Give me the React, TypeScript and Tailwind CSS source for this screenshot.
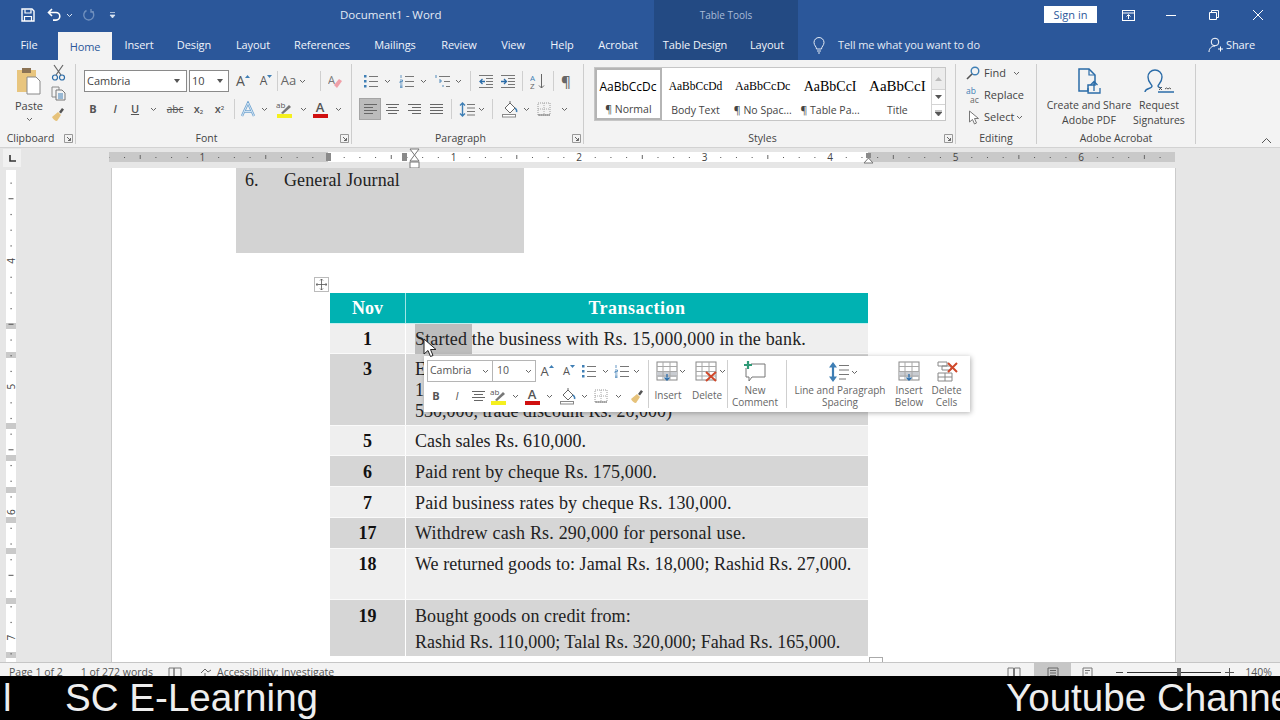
import React from 'react';

const serif = "font-['Liberation_Serif',serif]";

const Svg = ({ w, h, children, className = '' }: { w: number; h: number; children?: React.ReactNode; className?: string }) => (
  <svg width={w} height={h} viewBox={`0 0 ${w} ${h}`} fill="none" className={`shrink-0 ${className}`}>{children}</svg>
);

const Chev = ({ c = '#666', className = '' }: { c?: string; className?: string }) => (
  <Svg w={7} h={5} className={className}><path d="M1 1l2.5 2.5L6 1" stroke={c} strokeWidth="1" /></Svg>
);

const Sep = ({ h = 'h-[20px]' }: { h?: string }) => <div className={`w-px bg-[#cfcfcf] shrink-0 ${h}`} />;

const Cell = ({ w, children, className = '' }: { w: string; children?: React.ReactNode; className?: string }) => (
  <div className={`flex items-center justify-center shrink-0 h-[22px] ${w} ${className}`}>{children}</div>
);

// small ribbon drawings
const Lines = ({ kind }: { kind: 'left' | 'center' | 'right' | 'justify' }) => {
  const d = {
    left: 'M1 2.5h13M1 5.5h9M1 8.5h13M1 11.5h9',
    center: 'M1 2.5h13M3 5.5h9M1 8.5h13M3 11.5h9',
    right: 'M1 2.5h13M5 5.5h9M1 8.5h13M5 11.5h9',
    justify: 'M1 2.5h13M1 5.5h13M1 8.5h13M1 11.5h13',
  }[kind];
  return <Svg w={15} h={14}><path d={d} stroke="#666" /></Svg>;
};
const Bullets = () => (
  <Svg w={16} h={14}>
    <rect x="1" y="1" width="2.5" height="2.5" fill="#3f7fb5" /><rect x="1" y="6" width="2.5" height="2.5" fill="#3f7fb5" /><rect x="1" y="11" width="2.5" height="2.5" fill="#3f7fb5" />
    <path d="M6 2.5h9M6 7.5h9M6 12.5h9" stroke="#777" />
  </Svg>
);
const Numbers = () => (
  <Svg w={16} h={14}>
    <path d="M2 1v3M1 6h2.5v1.5H1V9h2.5M1 11h2.5M1 12.3h2.5M1 13.6h2.5" stroke="#3f7fb5" strokeWidth=".8" />
    <path d="M6 2.5h9M6 7.5h9M6 12.5h9" stroke="#777" />
  </Svg>
);
const Multi = () => (
  <Svg w={16} h={14}>
    <path d="M1 1v3M4 6h2v2H4M8 11v2" stroke="#3f7fb5" strokeWidth=".9" />
    <path d="M4 2.5h11M9 7.5h6M11 12.5h4" stroke="#777" />
  </Svg>
);
const Indent = ({ inc }: { inc?: boolean }) => (
  <Svg w={16} h={14}>
    <path d="M1 1.5h14M8 4.5h7M8 7.5h7M8 10.5h7M1 13.5h14" stroke="#777" />
    {inc ? <path d="M1 7.5h5M4 5l2.5 2.5L4 10" stroke="#2b6ca8" strokeWidth="1.3" /> : <path d="M7 7.5H2M4.5 5L2 7.5 4.5 10" stroke="#2b6ca8" strokeWidth="1.3" />}
  </Svg>
);
const LineSpace = () => (
  <Svg w={16} h={17}>
    <path d="M3.5 2v13M1 4.5L3.5 2 6 4.5M1 12.5L3.5 15 6 12.5" stroke="#3f7fb5" strokeWidth="1.4" />
    <path d="M8 3.5h8M8 7h8M8 10.5h8M8 14h8" stroke="#777" />
  </Svg>
);
const LineSpaceBig = () => (
  <Svg w={22} h={22}>
    <path d="M5 3v16" stroke="#3f7fb5" strokeWidth="2.2" />
    <path d="M1 6.5L5 1l4 5.500zM1 15.500L5 21l4-5.500z" fill="#3f7fb5" />
    <path d="M11 4.500h10M11 9h10M11 13.500h10M11 18h7" stroke="#777" />
  </Svg>
);
const Bucket = () => (
  <Svg w={18} h={18}>
    <path d="M4 8l5-5 5 5-5 5z" stroke="#666" fill="#fff" />
    <path d="M9 3V1" stroke="#666" />
    <path d="M14 8c1.5 1.5 2 3 1.5 4" stroke="#3f7fb5" strokeWidth="1.5" />
    <rect x="1.5" y="14.5" width="13" height="2.5" stroke="#888" fill="#fff" />
  </Svg>
);
const BorderBox = () => (
  <Svg w={14} h={14}>
    <rect x="1" y="1" width="12" height="12" stroke="#999" strokeDasharray="1 1" />
    <path d="M7 1v12M1 7h12" stroke="#aaa" strokeDasharray="1 1" />
    <path d="M1 13h12" stroke="#777" />
  </Svg>
);
const Painter = () => (
  <Svg w={16} h={16}>
    <path d="M9 6l3-4 2 1.5-3 4z" fill="#555" />
    <path d="M2 11l6-5 3 3-4 6c-2 0-4-2-5-4z" fill="#e6c27a" />
  </Svg>
);
const Highlight = () => (
  <div className="flex flex-col items-center w-[17px] leading-none">
    <Svg w={17} h={13}>
      <text x="0" y="7" fontSize="8" fill="#555" fontFamily="Open Sans">ab</text>
      <path d="M5 12l8-8 2 2-8 7z" fill="#777" />
    </Svg>
    <div className="w-[15px] h-[4px] bg-[#f5f01e]" />
  </div>
);
const FontColor = () => (
  <div className="flex flex-col items-center w-[15px]">
    <span className="text-[13px] leading-[12px] font-semibold text-[#555]">A</span>
    <div className="w-[15px] h-[4px] bg-[#d01010] mt-[1px]" />
  </div>
);
const TextEffect = () => (
  <Svg w={16} h={17}>
    <path d="M2 15L8 2l6 13M4.5 10.5h7" stroke="#6fa3d0" strokeWidth="2.4" />
    <path d="M2 15L8 2l6 13M4.5 10.5h7" stroke="#e8f2fa" strokeWidth=".8" />
  </Svg>
);
const SizeA = ({ up, size = 'text-[14px]' }: { up?: boolean; size?: string }) => (
  <div className="flex items-start">
    <span className={`${size} leading-[16px] text-[#555]`}>A</span>
    <Svg w={5} h={4} className="mt-[1px]"><path d={up ? 'M0 4l2.5-3L5 4z' : 'M0 1l2.5 3L5 1z'} fill="#3f7fb5" /></Svg>
  </div>
);
const Grid = ({ hi }: { hi?: boolean }) => (
  <>
    <rect x="1" y="1" width="20" height="18" fill="#fff" stroke="#888" />
    {hi && <rect x="1" y="11" width="20" height="5" fill="#c9ccd1" />}
    <path d="M1 5.5h20M1 10.5h20M1 15h20M7 1v18M14 1v18" stroke="#a8a8a8" />
  </>
);
const TableInsert = () => (
  <Svg w={22} h={21}>
    <Grid hi />
    <path d="M11 13v6M8.5 16.5L11 19l2.5-2.5" stroke="#2b6ca8" strokeWidth="1.3" />
  </Svg>
);
const TableDelete = () => (
  <Svg w={24} h={21}>
    <Grid />
    <path d="M11 11l10 9M21 11l-10 9" stroke="#d0482a" strokeWidth="2" />
  </Svg>
);
const CommentNew = () => (
  <Svg w={24} h={22}>
    <path d="M8 3h14v13H9l-3 4v-4H3V7" stroke="#777" />
    <path d="M5 0v8M1 4h8" stroke="#2f9a77" strokeWidth="2.2" />
  </Svg>
);
const DeleteCells = () => (
  <Svg w={24} h={21}>
    <path d="M3 1h9v4H3zM7 5h9v4H7zM3 12h14v8H3zM10 12v8M3 16h14" stroke="#888" />
    <path d="M13 2l9 9M22 2l-9 9" stroke="#d0482a" strokeWidth="2" />
  </Svg>
);
const Launcher = () => (
  <Svg w={9} h={9}>
    <path d="M.5.5h8v8h-8z" stroke="#999" />
    <path d="M3 3l3.5 3.5M6.5 4v2.5H4" stroke="#666" />
  </Svg>
);

const Group = ({ w, label, launcher, children }: { w: string; label: string; launcher?: boolean; children?: React.ReactNode }) => (
  <div className={`flex shrink-0 h-full ${w}`}>
    <div className="flex flex-col flex-1 min-w-0">
      <div className="flex-1 min-h-0">{children}</div>
      <div className={`relative h-[16px] text-center text-[10.5px] leading-[15px] text-[#444] ${launcher ? 'pr-[14px]' : ''}`}>
        {label}
        {launcher && <div className="absolute right-[2px] top-[3px]"><Launcher /></div>}
      </div>
    </div>
    <div className="w-px h-[80px] mt-[4px] bg-[#cdcdcd]" />
  </div>
);

const tabs = [
  { t: 'File', w: 'w-[58px]' }, { t: 'Home', w: 'w-[54px]', on: true }, { t: 'Insert', w: 'w-[54px]' }, { t: 'Design', w: 'w-[56px]' },
  { t: 'Layout', w: 'w-[62px]' }, { t: 'References', w: 'w-[76px]' }, { t: 'Mailings', w: 'w-[70px]' }, { t: 'Review', w: 'w-[58px]' },
  { t: 'View', w: 'w-[50px]' }, { t: 'Help', w: 'w-[48px]' }, { t: 'Acrobat', w: 'w-[64px]' },
];

const styleTiles = [
  { s: 'AaBbCcDd', l: 'Body Text', c: "text-[11.5px] font-['Liberation_Serif',serif]" },
  { s: 'AaBbCcDc', l: '¶ No Spac...', c: "text-[12px] font-['Liberation_Serif',serif]" },
  { s: 'AaBbCcI', l: '¶ Table Pa...', c: "text-[14px] font-['Liberation_Serif',serif]" },
  { s: 'AaBbCcI', l: 'Title', c: "text-[15px] font-['Liberation_Serif',serif]" },
];

const rows = [
  { n: '1', h: 'h-[30px]', bg: 'bg-[#efefef]', pt: 'pt-[5px]', tr: 'tracking-[0.17px]' },
  { n: '3', h: 'h-[72px]', bg: 'bg-[#d6d6d6]', pt: 'pt-[5px]', tr: '', lines: ['E', '1', '530,000, trade discount Rs. 20,000)'] },
  { n: '5', h: 'h-[30px]', bg: 'bg-[#efefef]', pt: 'pt-[5px]', tr: '', lines: ['Cash sales Rs. 610,000.'] },
  { n: '6', h: 'h-[31px]', bg: 'bg-[#d6d6d6]', pt: 'pt-[6px]', tr: 'tracking-[0.12px]', lines: ['Paid rent by cheque Rs. 175,000.'] },
  { n: '7', h: 'h-[31px]', bg: 'bg-[#efefef]', pt: 'pt-[6px]', tr: 'tracking-[0.17px]', lines: ['Paid business rates by cheque Rs. 130,000.'] },
  { n: '17', h: 'h-[31px]', bg: 'bg-[#d6d6d6]', pt: 'pt-[5px]', tr: 'tracking-[0.19px]', lines: ['Withdrew cash Rs. 290,000 for personal use.'] },
  { n: '18', h: 'h-[51px]', bg: 'bg-[#efefef]', pt: 'pt-[5px]', tr: 'tracking-[0.05px]', lines: ['We returned goods to: Jamal Rs. 18,000; Rashid Rs. 27,000.'] },
];

const HRuler = () => {
  const marks = [];
  for (let i = -14; i <= 53; i++) {
    const x = 219 + i * 15.69;
    if (i === 0) continue;
    if (i % 8 === 0) marks.push(<text key={i} x={x} y="13" fontSize="10" textAnchor="middle" fill="#444" fontFamily="Open Sans">{Math.abs(i / 8)}</text>);
    else if (i % 4 === 0) marks.push(<rect key={i} x={x} y="7" width="1" height="4" fill="#666" />);
    else marks.push(<rect key={i} x={x} y="9" width="1" height="1" fill="#555" />);
  }
  return (
    <svg width="1066" height="20" viewBox="0 0 1066 20" className="shrink-0">
      <rect x="0" y="4" width="1066" height="10" fill="#c9c9c9" />
      <rect x="219" y="4" width="540" height="10" fill="#fff" />
      {marks}
      <rect x="217" y="5" width="5" height="8" fill="#8a8a8a" />
      <rect x="293" y="5" width="5" height="8" fill="#8a8a8a" />
      <path d="M301 1h9l-4.5 6zM301 13l4.5-6 4.5 6z" fill="#fff" stroke="#777" />
      <rect x="301" y="14" width="9" height="6" fill="#fff" stroke="#777" />
      <rect x="757" y="5" width="5" height="5" fill="#8a8a8a" />
      <path d="M755 15l4.5-5 4.5 5z" fill="#fff" stroke="#777" />
    </svg>
  );
};

const VRuler = () => {
  const marks = [];
  for (let i = -5; i <= 26; i++) {
    const y = 91 + i * 15.69;
    if (i % 8 === 0) marks.push(<text key={i} transform={`translate(8.5 ${y}) rotate(-90)`} fontSize="10" textAnchor="middle" fill="#444" fontFamily="Open Sans">{4 + i / 8}</text>);
    else if (i % 4 === 0) marks.push(<rect key={i} x="2.5" y={y} width="5" height="1" fill="#555" />);
    else marks.push(<rect key={i} x="4.5" y={y} width="1.2" height="1.2" fill="#555" />);
  }
  const bands = [153, 182, 253, 285, 317, 347, 378, 428, 482];
  return (
    <svg width="10" height="492" viewBox="0 0 10 492" className="shrink-0">
      <rect width="10" height="492" fill="#fff" />
      {bands.map(y => <rect key={y} x="0" y={y} width="10" height="6" fill="#c9c9c9" />)}
      {marks}
    </svg>
  );
};

const FloatLabel = ({ children, className = '' }: { children?: React.ReactNode; className?: string }) => (
  <div className={`text-[10px] leading-[12px] text-[#666] text-center whitespace-nowrap ${className}`}>{children}</div>
);

export default function App() {
  return (
    <div className="w-[1280px] h-[720px] overflow-hidden flex flex-col font-['Open_Sans',sans-serif] bg-black">
      {/* title bar */}
      <div className="flex h-[30px] shrink-0 bg-[#2b579a] text-white text-[11px]">
        <div className="w-[340px] flex items-center">
          <Svg w={14} h={14} className="ml-[21px]">
            <path d="M1 1h10l2 2v10H1z" stroke="#fff" strokeWidth="1.4" />
            <path d="M4 1.5v3.5h6V1.5M3.5 13V8.5h7V13" stroke="#fff" strokeWidth="1.2" />
          </Svg>
          <Svg w={15} h={14} className="ml-[12px]"><path d="M5 1L1.5 4.5 5 8M2 4.5h7a3.8 3.8 0 010 7.6H6" stroke="#fff" strokeWidth="1.6" /></Svg>
          <Chev c="#dbe5f2" className="ml-[4px]" />
          <Svg w={14} h={14} className="ml-[9px]"><path d="M9 2.5a5 5 0 11-4.5 0M9 1v3h3" stroke="#6f8fbd" strokeWidth="1.4" /></Svg>
          <Svg w={7} h={8} className="ml-[13px]"><path d="M1 1.5h5M1 4l2.5 3L6 4z" stroke="#dbe5f2" fill="#dbe5f2" strokeWidth=".7" /></Svg>
        </div>
        <div className="w-[314px] leading-[30px] text-[11.5px] text-[#e4ebf5]">Document1 - Word</div>
        <div className="w-[144px] bg-[#234a83] text-center leading-[30px] text-[10px] text-[#a9bcd8]">Table Tools</div>
        <div className="flex-1 flex items-center">
          <div className="ml-[246px] mb-[1px] w-[53px] h-[17px] bg-white text-[#2b579a] text-center text-[11px] leading-[17px]">Sign in</div>
          <Svg w={13} h={11} className="ml-[25px]">
            <rect x=".5" y=".5" width="12" height="10" stroke="#fff" />
            <path d="M.5 3h12M6.5 9V5M4.5 6.5l2-2 2 2" stroke="#fff" />
          </Svg>
          <div className="ml-[31px] w-[10px] h-px bg-white" />
          <Svg w={10} h={10} className="ml-[33px]"><path d="M.5 2.5h7v7h-7zM2.5 2.5v-2h7v7h-2" stroke="#fff" /></Svg>
          <Svg w={12} h={12} className="ml-[33px]"><path d="M1 1l10 10M11 1L1 11" stroke="#fff" /></Svg>
        </div>
      </div>

      {/* tabs */}
      <div className="flex h-[30px] shrink-0 bg-[#2b579a] text-[#f0f4fa] text-[11px] tracking-[-0.1px]">
        {tabs.map(t => (
          <div key={t.t} className={`${t.w} text-center leading-[30px] ${t.on ? 'bg-[#f3f3f3] text-[#2b579a] mt-[2px] leading-[26px]' : ''}`}>{t.t}</div>
        ))}
        <div className="w-[4px]" />
        <div className="flex w-[144px] bg-[#234a83]">
          <div className="w-[82px] text-center leading-[30px]">Table Design</div>
          <div className="w-[62px] text-center leading-[30px]">Layout</div>
        </div>
        <Svg w={12} h={17} className="ml-[15px] mt-[7px]">
          <path d="M3.5 12c0-2.5-2.5-3.5-2.5-6.5a5 5 0 0110 0c0 3-2.5 4-2.5 6.5zM4 14h4M5 16h2" stroke="#e4ebf5" />
        </Svg>
        <div className="ml-[13px] w-[343px] leading-[30px] text-[#e4ebf5]">Tell me what you want to do</div>
        <Svg w={16} h={16} className="ml-[27px] mt-[7px]">
          <circle cx="7" cy="5" r="3.8" stroke="#fff" />
          <path d="M1 15c0-3.5 2.5-6 6-6M10 12h5M12.5 9.5v5" stroke="#fff" />
        </Svg>
        <div className="ml-[2px] leading-[30px]">Share</div>
      </div>

      {/* ribbon */}
      <div className="flex h-[88px] shrink-0 bg-[#f3f3f3] border-b border-[#d2d2d2] text-[#444]">
        <Group w="w-[76px]" label="Clipboard" launcher>
          <div className="flex">
            <div className="w-[46px] flex flex-col items-center pt-[7px] pl-[12px]">
              <Svg w={26} h={28}>
                <rect x="1" y="3" width="19" height="22" fill="#e8c57e" />
                <rect x="6" y="1" width="9" height="5" fill="#8b7355" />
                <path d="M11 10h9l4 4v13H11z" fill="#fff" stroke="#888" />
              </Svg>
              <div className="text-[11px] leading-[15px] mt-[3px]">Paste</div>
              <Chev className="mt-[4px]" />
            </div>
            <div className="flex flex-col items-center w-[24px] pt-[4px] gap-[5px]">
              <Svg w={15} h={17}>
                <path d="M3 1l7 10M12 1L5 11" stroke="#666" strokeWidth="1.2" />
                <circle cx="4" cy="13.5" r="2.5" stroke="#2b6ca8" strokeWidth="1.2" />
                <circle cx="11" cy="13.5" r="2.5" stroke="#2b6ca8" strokeWidth="1.2" />
              </Svg>
              <Svg w={15} h={15}>
                <path d="M1 1h7v10H1z" stroke="#888" />
                <path d="M5 4h6l3 3v7H5z" fill="#f3f3f3" stroke="#777" />
                <path d="M7 8h5M7 10h5M7 12h5" stroke="#3f7fb5" />
              </Svg>
              <Painter />
            </div>
          </div>
        </Group>

        <Group w="w-[276px]" label="Font" launcher>
          <div className="flex flex-col pt-[10px] gap-[6px]">
            <div className="flex items-center pl-[8px]">
              <div className="w-[103px] h-[22px] bg-white border border-[#8a8a8a] flex items-center justify-between pl-[2px] pr-[6px] text-[11px]">
                Cambria <Svg w={6} h={4}><path d="M0 0h6L3 4z" fill="#555" /></Svg>
              </div>
              <div className="ml-[2px] w-[40px] h-[22px] bg-white border border-[#8a8a8a] flex items-center justify-between pl-[2px] pr-[5px] text-[11px]">
                10 <Svg w={6} h={4}><path d="M0 0h6L3 4z" fill="#555" /></Svg>
              </div>
              <Cell w="w-[24px] ml-[2px]"><SizeA up /></Cell>
              <Cell w="w-[22px]"><SizeA size="text-[12px]" /></Cell>
              <Sep />
              <Cell w="w-[42px]" className="pr-[11px]"><span className="text-[13px] text-[#666] mr-[3px]">Aa</span><Chev /></Cell>
              <Sep />
              <Cell w="w-[28px]">
                <Svg w={15} h={15}>
                  <text x="0" y="10" fontSize="11" fill="#777" fontFamily="Open Sans">A</text>
                  <path d="M6 11l5-6 3 2-5 7z" fill="#f0a0a8" />
                </Svg>
              </Cell>
            </div>
            <div className="flex items-center pl-[6px] text-[#555]">
              <Cell w="w-[22px]"><span className="text-[11px] font-bold">B</span></Cell>
              <Cell w="w-[22px]"><span className="text-[11px] italic font-semibold">I</span></Cell>
              <Cell w="w-[36px]"><span className="text-[11px] font-semibold underline mr-[11px]">U</span><Chev /></Cell>
              <Cell w="w-[26px]"><span className="text-[10px] line-through">abc</span></Cell>
              <Cell w="w-[21px]"><span className="text-[11px] font-semibold">x<sub className="text-[6px]">2</sub></span></Cell>
              <Cell w="w-[21px]"><span className="text-[11px] font-semibold">x<sup className="text-[6px]">2</sup></span></Cell>
              <div className="ml-[4px]"><Sep /></div>
              <Cell w="w-[38px]"><TextEffect /><Chev className="ml-[5px]" /></Cell>
              <Cell w="w-[36px]"><Highlight /><Chev className="ml-[7px]" /></Cell>
              <Cell w="w-[36px]"><FontColor /><Chev className="ml-[7px]" /></Cell>
            </div>
          </div>
        </Group>

        <Group w="w-[232px]" label="Paragraph" launcher>
          <div className="flex flex-col pt-[10px] gap-[6px]">
            <div className="flex items-center pl-[7px]">
              <Cell w="w-[36px]"><Bullets /><Chev className="ml-[5px]" /></Cell>
              <Cell w="w-[36px]"><Numbers /><Chev className="ml-[5px]" /></Cell>
              <Cell w="w-[34px]"><Multi /><Chev className="ml-[4px]" /></Cell>
              <div className="ml-[5px]"><Sep /></div>
              <Cell w="w-[22px] ml-[4px]"><Indent /></Cell>
              <Cell w="w-[22px]"><Indent inc /></Cell>
              <div className="ml-[3px]"><Sep /></div>
              <Cell w="w-[24px] ml-[3px]">
                <Svg w={16} h={17}>
                  <text x="0" y="7.5" fontSize="8" fill="#3f7fb5" fontFamily="Open Sans">A</text>
                  <text x="0" y="16" fontSize="8" fill="#666" fontFamily="Open Sans">Z</text>
                  <path d="M11.5 1v14M9 12.5l2.5 2.5 2.5-2.5" stroke="#666" />
                </Svg>
              </Cell>
              <div className="ml-[3px]"><Sep /></div>
              <Cell w="w-[24px]"><span className="text-[15px] font-semibold text-[#666]">¶</span></Cell>
            </div>
            <div className="flex items-center pl-[7px]">
              <Cell w="w-[22px]" className="bg-[#bcbcbc] border border-[#a5a5a5]"><Lines kind="left" /></Cell>
              <Cell w="w-[22px]"><Lines kind="center" /></Cell>
              <Cell w="w-[22px]"><Lines kind="right" /></Cell>
              <Cell w="w-[23px]"><Lines kind="justify" /></Cell>
              <div className="ml-[3px]"><Sep /></div>
              <Cell w="w-[34px] ml-[3px]"><LineSpace /><Chev className="ml-[3px]" /></Cell>
              <div className="ml-[3px]"><Sep /></div>
              <Cell w="w-[34px] ml-[5px]"><Bucket /><Chev className="ml-[4px]" /></Cell>
              <Cell w="w-[40px]"><BorderBox /><Chev className="ml-[10px]" /></Cell>
            </div>
          </div>
        </Group>

        <Group w="w-[372px]" label="Styles" launcher>
          <div className="ml-[10px] mt-[7px] w-[352px] h-[54px] flex bg-white border border-[#c6c6c6]">
            <div className="w-[67px] border-2 border-[#b5b5b5] flex flex-col items-center overflow-hidden">
              <div className="text-[12px] leading-[17px] mt-[8px] whitespace-nowrap w-[60px] pl-[1px] overflow-hidden text-black">AaBbCcDc</div>
              <div className="text-[10.5px] leading-[14px] mt-[7px]">¶ Normal</div>
            </div>
            {styleTiles.map(s => (
              <div key={s.l} className="w-[67.5px] flex flex-col items-center overflow-hidden">
                <div className={`${s.c} h-[21px] leading-[21px] mt-[8px] whitespace-nowrap text-black`}>{s.s}</div>
                <div className="text-[10.5px] leading-[14px] mt-[6px] whitespace-nowrap">{s.l}</div>
              </div>
            ))}
            <div className="ml-auto w-[14px] flex flex-col border-l border-[#d4d4d4] text-[#555]">
              <div className="h-[21px] bg-[#ececec] flex items-center justify-center"><Svg w={7} h={4}><path d="M0 4l3.5-4L7 4z" fill="#bbb" /></Svg></div>
              <div className="h-[16px] border-y border-[#d4d4d4] flex items-center justify-center"><Svg w={7} h={4}><path d="M0 0l3.5 4L7 0z" fill="#555" /></Svg></div>
              <div className="flex-1 flex items-center justify-center"><Svg w={7} h={6}><path d="M0 0h7M0 2l3.5 4L7 2z" stroke="#555" fill="#555" strokeWidth=".7" /></Svg></div>
            </div>
          </div>
        </Group>

        <Group w="w-[81px]" label="Editing">
          <div className="flex flex-col pl-[10px] pt-[2px] text-[11px] leading-[22px]">
            <div className="flex items-center h-[22px]">
              <Svg w={14} h={14}><circle cx="9" cy="5" r="3.8" stroke="#3f7fb5" strokeWidth="1.4" /><path d="M6 8l-5 5" stroke="#555" strokeWidth="1.6" /></Svg>
              <span className="ml-[4px] mr-[7px]">Find</span><Chev />
            </div>
            <div className="flex items-center h-[22px]">
              <Svg w={15} h={17}>
                <text x="0" y="7" fontSize="8.5" fill="#3f7fb5" fontFamily="Open Sans">ab</text>
                <text x="4" y="15.5" fontSize="8.5" fill="#666" fontFamily="Open Sans">ac</text>
              </Svg>
              <span className="ml-[3px]">Replace</span>
            </div>
            <div className="flex items-center h-[22px]">
              <Svg w={12} h={15} className="ml-[2px]"><path d="M1.5 1v11l3-2.5 2 4.5 2-1-2-4.5h4z" stroke="#777" fill="#fff" /></Svg>
              <span className="ml-[4px] mr-[2px]">Select</span><Chev />
            </div>
          </div>
        </Group>

        <Group w="w-[159px]" label="Adobe Acrobat">
          <div className="flex pt-[8px] text-[10.5px] leading-[15px] text-center">
            <div className="w-[84px] ml-[10px] flex flex-col items-center whitespace-nowrap">
              <Svg w={24} h={26}>
                <path d="M2 1h10l6 6v10H11v6H2z" stroke="#2b6ca8" strokeWidth="1.5" />
                <path d="M12 1v6h6" stroke="#2b6ca8" strokeWidth="1.2" />
                <path d="M17 23v-9M13.5 17l3.5-3.5 3.5 3.5M11 20v5h12v-5" stroke="#2b6ca8" strokeWidth="1.3" />
              </Svg>
              <div className="mt-[4px]">Create and Share</div>
              <div>Adobe PDF</div>
            </div>
            <div className="w-[54px] ml-[1px] flex flex-col items-center whitespace-nowrap">
              <Svg w={32} h={26}>
                <path d="M2 24c0-4 7-3 7-6 0-2-4-3-4-9a7 7 0 0114 0c0 6-4 7-4 9 0 1 1 1.500 3 2" stroke="#2b6ca8" strokeWidth="1.4" />
                <path d="M15 24h16" stroke="#2b6ca8" strokeWidth="1.5" />
                <path d="M16 19l3 3M19 19l-3 3M22 21l1.500-1 1.500 1 1.500-1 1.500 1" stroke="#555" />
              </Svg>
              <div className="mt-[4px]">Request</div>
              <div>Signatures</div>
            </div>
          </div>
        </Group>

        <div className="flex-1 flex items-end justify-end pb-[3px] pr-[8px]">
          <Svg w={11} h={7}><path d="M1 6l4.500-4.500L10 6" stroke="#555" /></Svg>
        </div>
      </div>

      {/* horizontal ruler */}
      <div className="flex h-[20px] shrink-0 bg-[#e6e6e6]">
        <div className="ml-[3px] mt-px w-[18px] h-[18px] bg-[#f1f1f1] flex items-center justify-center">
          <Svg w={7} h={7}><path d="M1 0v6h6" stroke="#333" strokeWidth="1.6" /></Svg>
        </div>
        <div className="ml-[88px]"><HRuler /></div>
      </div>

      {/* document area */}
      <div className="flex h-[494px] shrink-0 bg-[#e6e6e6] overflow-hidden">
        <div className="w-[111px] shrink-0 pl-[6px] pt-[2px]"><VRuler /></div>
        <div className={`relative w-[1065px] shrink-0 bg-white border-x border-[#cbcbcb] ${serif} text-[18px] text-[#222]`}>
          <div className="ml-[124px] w-[288px] h-[85px] bg-[#d3d3d3] flex leading-[24px] tracking-[0.1px] text-[#222]">
            <span className="ml-[9px] w-[39px]">6.</span>
            <span>General Journal</span>
          </div>

          <div className="ml-[218px] mt-[40px] w-[538px]">
            <div className="flex h-[31px] bg-[#00b2b2] border-b border-[#c4efef] text-white font-bold leading-[30px] text-center">
              <div className="w-[76px] border-r border-[#9fe5e5]">Nov</div>
              <div className="flex-1 tracking-[0.5px]">Transaction</div>
            </div>
            {rows.map(r => (
              <div key={r.n} className={`flex border-b border-[#fafafa] ${r.h} ${r.bg}`}>
                <div className={`w-[76px] border-r border-white leading-[21px] font-bold text-center text-[#111] ${r.pt}`}>{r.n}</div>
                <div className={`pl-[9px] leading-[21px] whitespace-nowrap ${r.pt} ${r.tr}`}>
                  {r.lines ? r.lines.map(l => <div key={l}>{l}</div>) : (
                    <div><span className="bg-[#bdbdbd] py-[5px]">Started </span>the business with Rs. 15,000,000 in the bank.</div>
                  )}
                </div>
              </div>
            ))}
            <div className="flex h-[56px] bg-[#d6d6d6]">
              <div className="w-[76px] border-r border-white pt-[6px] leading-[21px] font-bold text-center text-[#111]">19</div>
              <div className="pl-[9px] pt-[6px] leading-[21px] whitespace-nowrap">
                <div className="tracking-[0.1px]">Bought goods on credit from:</div>
                <div className="mt-[5px]">Rashid Rs. 110,000; Talal Rs. 320,000; Fahad Rs. 165,000.</div>
              </div>
            </div>
          </div>

          {/* table handles */}
          <div className="absolute left-[202px] top-[109px] w-[15px] h-[15px] bg-white border border-[#bbb] flex items-center justify-center">
            <Svg w={11} h={11}><path d="M5.500 0v11M0 5.500h11M4 1.500L5.500 0 7 1.500M4 9.500L5.500 11 7 9.500M1.500 4L0 5.500 1.500 7M9.500 4L11 5.500 9.500 7" stroke="#555" strokeWidth=".8" /></Svg>
          </div>
          <div className="absolute left-[757px] top-[489px] w-[14px] h-[6px] bg-white border border-[#aaa]" />

          {/* mini toolbar */}
          <div className="absolute left-[312px] top-[188px] w-[546px] h-[56px] bg-white shadow-[1px_1px_5px_rgba(0,0,0,0.3)] flex font-['Open_Sans',sans-serif] tracking-normal text-[#555]">
            <div className="w-[224px] shrink-0 flex flex-col pl-[3px] pt-[4px]">
              <div className="flex items-center h-[22px]">
                <div className="w-[66px] h-[22px] border border-[#b5b5b5] flex items-center justify-between pl-[2px] pr-[3px] text-[10.5px]">
                  Cambria <Chev />
                </div>
                <div className="w-[43px] h-[22px] border border-l-0 border-[#b5b5b5] flex items-center justify-between pl-[4px] pr-[3px] text-[10.5px]">
                  10 <Chev />
                </div>
                <Cell w="w-[22px]"><SizeA up size="text-[13px]" /></Cell>
                <Cell w="w-[22px]"><SizeA size="text-[11px]" /></Cell>
                <Cell w="w-[30px]"><Bullets /><Chev className="ml-[5px]" /></Cell>
                <Cell w="w-[34px]"><Numbers /><Chev className="ml-[3px]" /></Cell>
              </div>
              <div className="flex items-center h-[22px] mt-[3px]">
                <Cell w="w-[18px]"><span className="text-[11px] font-bold">B</span></Cell>
                <Cell w="w-[24px]"><span className="text-[11px] italic">I</span></Cell>
                <Cell w="w-[18px]"><Lines kind="center" /></Cell>
                <Cell w="w-[34px]"><Highlight /><Chev className="ml-[5px]" /></Cell>
                <Cell w="w-[35px]"><FontColor /><Chev className="ml-[6px]" /></Cell>
                <Cell w="w-[34px]"><Bucket /><Chev className="ml-[4px]" /></Cell>
                <Cell w="w-[36px]"><BorderBox /><Chev className="ml-[7px]" /></Cell>
                <Cell w="w-[22px]"><Painter /></Cell>
              </div>
            </div>
            <Sep h="h-[48px] mt-[4px]" />
            <div className="w-[39px] flex flex-col items-center pt-[5px]">
              <div className="flex items-center ml-[5px]"><TableInsert /><Chev className="ml-[1px]" /></div>
              <FloatLabel className="mt-[7px] mr-[1px]">Insert</FloatLabel>
            </div>
            <div className="w-[39px] flex flex-col items-center pt-[5px]">
              <div className="flex items-center ml-[5px]"><TableDelete /><Chev /></div>
              <FloatLabel className="mt-[7px] mr-[1px]">Delete</FloatLabel>
            </div>
            <Sep h="h-[48px] mt-[4px]" />
            <div className="w-[58px] flex flex-col items-center pt-[5px] pr-[4px]">
              <CommentNew />
              <FloatLabel className="mt-[1px]">New</FloatLabel>
              <FloatLabel>Comment</FloatLabel>
            </div>
            <Sep h="h-[48px] mt-[4px]" />
            <div className="w-[104px] flex flex-col items-center pt-[5px] pl-[2px]">
              <div className="flex items-center ml-[5px]"><LineSpaceBig /><Chev className="ml-[1px]" /></div>
              <FloatLabel className="mt-[1px]">Line and Paragraph</FloatLabel>
              <FloatLabel>Spacing</FloatLabel>
            </div>
            <div className="w-[36px] flex flex-col items-center pt-[5px]">
              <TableInsert />
              <FloatLabel className="mt-[2px]">Insert</FloatLabel>
              <FloatLabel>Below</FloatLabel>
            </div>
            <div className="w-[39px] flex flex-col items-center pt-[5px]">
              <DeleteCells />
              <FloatLabel className="mt-[2px]">Delete</FloatLabel>
              <FloatLabel>Cells</FloatLabel>
            </div>
          </div>

          {/* mouse pointer */}
          <Svg w={14} h={20} className="absolute left-[311px] top-[170px]">
            <path d="M1 1v15l4-3.500 2.500 6 2.500-1-2.500-6H13z" fill="#fff" stroke="#222" />
          </Svg>
        </div>
      </div>

      {/* status bar, cut by the band below */}
      <div className="h-[14px] shrink-0 overflow-hidden bg-[#f3f3f3] border-t border-[#c6c6c6] text-[10.5px] text-[#555]">
        <div className="flex items-center h-[19px]">
          <span className="ml-[9px]">Page 1 of 2</span>
          <span className="ml-[18px]">1 of 272 words</span>
          <Svg w={14} h={12} className="ml-[15px]"><path d="M1 1h5v10H1zM6 1h7v10H6z" stroke="#777" /></Svg>
          <Svg w={16} h={12} className="ml-[18px]"><path d="M1 6l4-4 3 3 3-2M5 6v5M2 11h11" stroke="#666" /></Svg>
          <span className="ml-[1px]">Accessibility: Investigate</span>
          <div className="ml-auto flex items-center h-[19px]">
            <Svg w={14} h={12}><path d="M1 1h5.500v10H1zM7.500 1H13v10H7.500z" stroke="#777" /></Svg>
            <div className="ml-[13px] w-[37px] h-[19px] bg-[#c6c6c6] flex items-center justify-center">
              <Svg w={12} h={12}><path d="M1 1h10v10H1zM3 3.500h6M3 6h6M3 8.500h6" stroke="#666" /></Svg>
            </div>
            <Svg w={14} h={12} className="ml-[11px]"><path d="M1 1h9v10H1zM3 3.500h5M3 6h3" stroke="#777" /></Svg>
            <div className="ml-[20px] w-[7px] h-px bg-[#444]" />
            <div className="ml-[4px] w-[94px] h-px bg-[#333] relative">
              <div className="absolute left-[50px] top-[-4px] w-[4px] h-[9px] bg-[#666]" />
            </div>
            <Svg w={9} h={9} className="ml-[4px]"><path d="M4.500 0v9M0 4.500h9" stroke="#555" /></Svg>
            <span className="ml-[11px] mr-[8px]">140%</span>
          </div>
        </div>
      </div>

      {/* black caption band */}
      <div className="h-[44px] shrink-0 bg-black flex items-center overflow-hidden whitespace-nowrap text-[38.6px] leading-[44px] text-[#eeeeee] font-['Liberation_Sans',sans-serif]">
        <span className="w-[65px] shrink-0 pl-[3px]">l</span>
        <span className="w-[941px] shrink-0">SC E-Learning</span>
        <span className="shrink-0">Youtube Channel</span>
      </div>
    </div>
  );
}
